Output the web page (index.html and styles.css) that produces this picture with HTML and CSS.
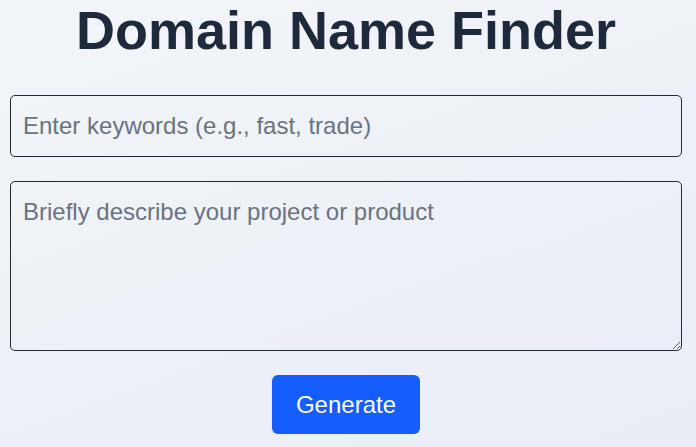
FILE: index.html
```html
<!DOCTYPE html>
<html lang="en">
<head>
<meta charset="utf-8">
<title>Domain Name Finder</title>
<link rel="stylesheet" href="styles.css">
</head>
<body>
<main class="finder">
  <h1 class="title">Domain Name Finder</h1>
  <form class="form">
    <input class="field" type="text" placeholder="Enter keywords (e.g., fast, trade)">
    <textarea class="field area" placeholder="Briefly describe your project or product"></textarea>
    <button class="btn" type="button">Generate</button>
  </form>
</main>
</body>
</html>
```
FILE: styles.css
```css
html, body {
  margin: 0;
  padding: 0;
  height: 100%;
}
body {
  background: linear-gradient(160deg, #f2f5f9 0%, #e9edf5 100%);
  font-family: "Liberation Sans", Arial, sans-serif;
  color: #1e293b;
  overflow: hidden;
}
.finder {
  padding: 0 14px 0 10px;
}
.title {
  margin: 0;
  text-align: center;
  font-size: 54px;
  line-height: 60px;
  font-weight: 700;
  color: #1e293b;
}
.form {
  display: flex;
  flex-direction: column;
  align-items: center;
  margin-top: 35px;
}
.field {
  box-sizing: border-box;
  width: 100%;
  height: 62px;
  padding: 12px 12px;
  border: 1px solid #1e293b;
  border-radius: 5px;
  background: transparent;
  font-family: "Liberation Sans", Arial, sans-serif;
  font-size: 24px;
  color: #1e293b;
  outline: none;
}
.field::placeholder {
  color: #6b7280;
}
.area {
  display: block;
  height: 170px;
  margin-top: 24px;
  padding: 16px 12px;
  resize: vertical;
}
.btn {
  box-sizing: border-box;
  width: 148px;
  height: 59px;
  margin-top: 24px;
  border: none;
  border-radius: 6px;
  background: #155dfc;
  color: #ffffff;
  font-family: "Liberation Sans", Arial, sans-serif;
  font-size: 24px;
  cursor: pointer;
}
```
